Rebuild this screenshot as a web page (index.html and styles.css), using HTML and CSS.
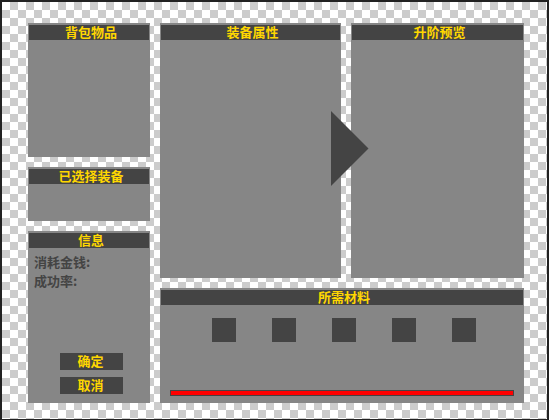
FILE: index.html
```html
<!DOCTYPE html>
<html lang="zh-CN">
<head>
  <meta charset="UTF-8">
  <meta name="viewport" content="width=device-width, initial-scale=1.0">
  <title>装备升阶</title>
  <link rel="stylesheet" href="styles.css">
</head>
<body>

  <main class="window">
    <div class="sidebar">
      <section class="panel bag">
        <h2>背包物品</h2>
      </section>
      <section class="panel selected">
        <h2>已选择装备</h2>
      </section>
      <section class="panel info">
        <h2>信息</h2>
        <div class="info-body">
          <p>消耗金钱:</p>
          <p>成功率:</p>
          <div class="buttons">
            <button type="button">确定</button>
            <button type="button">取消</button>
          </div>
        </div>
      </section>
    </div>

    <div class="content">
      <div class="compare">
        <section class="panel current">
          <h2>装备属性</h2>
          <svg class="arrow" width="38" height="75" viewBox="0 0 38 75" aria-hidden="true">
            <path d="M0 0 L37.5 37.5 L0 75 Z" fill="#444"/>
          </svg>
        </section>
        <section class="panel preview">
          <h2>升阶预览</h2>
        </section>
      </div>
      <section class="panel materials">
        <h2>所需材料</h2>
        <div class="slots">
          <div class="slot"></div>
          <div class="slot"></div>
          <div class="slot"></div>
          <div class="slot"></div>
          <div class="slot"></div>
        </div>
        <div class="bar" role="progressbar" aria-valuenow="100" aria-label="升阶进度">
          <div class="bar-fill" style="width: 100%"></div>
        </div>
      </section>
    </div>
  </main>

</body>
</html>
```

FILE: styles.css
```css
* {
  box-sizing: border-box;
}

body {
  margin: 0;
  font-family: "Noto Sans CJK SC", sans-serif;
  font-size: 13px;
  font-weight: bold;
  line-height: 19px;
  color: #444;
}

h2, p {
  margin: 0;
}

.window {
  display: flex;
  gap: 10px;
  min-height: 100vh;
  padding: 21px 23px 16px 26px;
  border: 2px solid #222;
  border-bottom-width: 1px;
  background: repeating-conic-gradient(#ccc 0% 25%, #fff 0% 50%) 0 0 / 16px 16px;
  background-origin: padding-box;
}

.sidebar {
  display: flex;
  flex-direction: column;
  gap: 10px;
  width: 122px;
}

.content {
  display: flex;
  flex: 1;
  flex-direction: column;
  gap: 10px;
}

.panel {
  display: flex;
  flex-direction: column;
  padding: 2px 1px 1px;
  background-color: #868686;
}

.panel h2 {
  height: 15px;
  padding-left: 4px;
  background-color: #444;
  color: #ffd700;
  font-size: 13px;
  line-height: 13px;
  text-align: center;
}

.bag {
  min-height: 134px;
}

.selected {
  min-height: 54px;
}

.info {
  flex: 1;
}

.info-body {
  display: flex;
  flex: 1;
  flex-direction: column;
  padding: 4px 0 8px 5px;
}

.buttons {
  display: flex;
  flex-direction: column;
  align-items: center;
  gap: 7px;
  margin-top: auto;
}

button {
  width: 63px;
  height: 17px;
  padding: 0 2px 2px 0;
  border: none;
  background-color: #444;
  color: #ffd700;
  font: inherit;
  line-height: 15px;
  cursor: pointer;
}

button:hover {
  background-color: #555;
}

.compare {
  display: grid;
  flex: 1;
  grid-template-columns: 181fr 173fr;
  gap: 10px;
}

.current {
  position: relative;
}

.arrow {
  position: absolute;
  top: 88px;
  right: -28px;
  z-index: 1;
}

.materials {
  min-height: 115px;
}

.slots {
  display: flex;
  justify-content: center;
  gap: 36px;
  padding: 13px 0 0 4px;
}

.slot {
  width: 24px;
  height: 24px;
  background-color: #444;
}

.bar {
  height: 6px;
  margin: auto 9px 6px;
  border: 1px solid #444;
}

.bar-fill {
  height: 100%;
  background-color: #f00;
}
```
